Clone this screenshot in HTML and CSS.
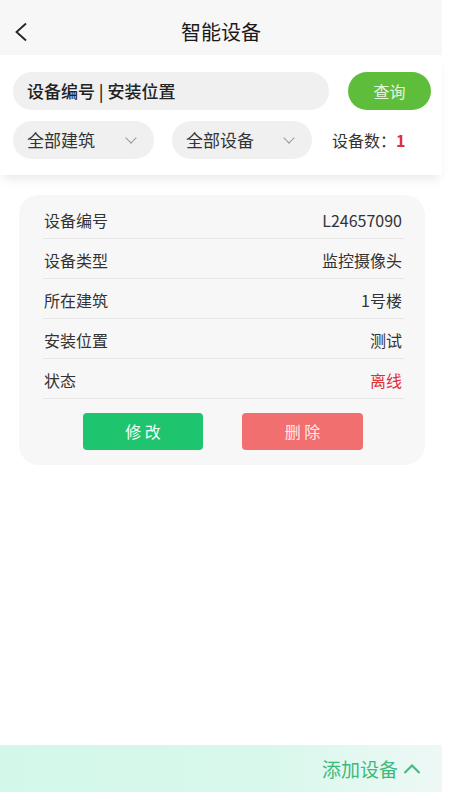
FILE: index.html
```html
<!DOCTYPE html>
<html lang="zh-CN">
<head>
    <meta charset="UTF-8">
    <meta name="viewport" content="width=device-width, initial-scale=1.0">
    <title>智能设备</title>
    <link rel="stylesheet" href="styles.css">
</head>
<body>
<div id="page">
    <header class="top">
        <a class="back">
            <svg width="14" height="20" viewBox="0 0 14 20"><path d="M12 1.5 L2.5 10 L12 18.5" fill="none" stroke="#222" stroke-width="1.8"/></svg>
        </a>
        <h1 class="title">智能设备</h1>
    </header>

    <section class="filter">
        <div class="search-row">
            <div class="search">设备编号 | 安装位置</div>
            <a class="btn-query">查询</a>
        </div>
        <div class="select-row">
            <div class="select">全部建筑<i class="arrow"></i></div>
            <div class="select">全部设备<i class="arrow"></i></div>
            <div class="count">设备数：<b>1</b></div>
        </div>
    </section>

    <div class="card">
        <ul class="info">
            <li><span>设备编号</span><span>L24657090</span></li>
            <li><span>设备类型</span><span>监控摄像头</span></li>
            <li><span>所在建筑</span><span>1号楼</span></li>
            <li><span>安装位置</span><span>测试</span></li>
            <li><span>状态</span><span class="off">离线</span></li>
        </ul>
        <div class="ops">
            <a class="btn edit">修 改</a>
            <a class="btn del">删 除</a>
        </div>
    </div>

    <div class="add-bar">
        添加设备
        <svg width="18" height="12" viewBox="0 0 18 12"><path d="M1.5 10 L9 2.5 L16.5 10" fill="none" stroke="#3cba7c" stroke-width="2"/></svg>
    </div>
</div>
</body>
</html>
```

FILE: styles.css
```css
body {
    margin: 0;
    background: #fff;
    font-family: "Noto Sans CJK SC", "Noto Sans", sans-serif;
    color: #333;
}
ul {
    margin: 0;
    padding: 0;
    list-style: none;
}
a {
    text-decoration: none;
}
#page {
    width: 442px;
    height: 800px;
    display: flex;
    flex-direction: column;
}
.top {
    height: 55px;
    background: #f7f7f7;
    display: flex;
    align-items: center;
    justify-content: center;
    position: relative;
}
.back {
    position: absolute;
    left: 14px;
    top: 22px;
    line-height: 0;
}
.title {
    margin: 0;
    font-size: 20px;
    font-weight: 400;
    color: #1a1a1a;
    padding-top: 8px;
}
.filter {
    padding: 17px 11px 16px 13px;
    background: #fff;
    box-shadow: 0 7px 10px -3px rgba(0, 0, 0, .09);
}
.search-row {
    display: flex;
    align-items: center;
}
.search {
    width: 302px;
    height: 38px;
    line-height: 38px;
    padding-left: 14px;
    border-radius: 19px;
    background: #f0f0f0;
    font-size: 17px;
    font-weight: 500;
    color: #222;
}
.btn-query {
    margin-left: 19px;
    width: 83px;
    height: 38px;
    line-height: 38px;
    border-radius: 19px;
    background: #5fbd3c;
    color: #e6f4dc;
    font-size: 16px;
    text-align: center;
}
.select-row {
    display: flex;
    align-items: center;
    margin-top: 11px;
}
.select {
    width: 127px;
    height: 38px;
    line-height: 38px;
    padding-left: 14px;
    border-radius: 19px;
    background: #f0f0f0;
    font-size: 17px;
    color: #333;
    margin-right: 18px;
    display: flex;
    align-items: center;
}
.select:nth-child(2) {
    width: 126px;
    margin-right: 20px;
}
.arrow {
    width: 7px;
    height: 7px;
    border-right: 1px solid #999;
    border-bottom: 1px solid #999;
    transform: rotate(45deg);
    margin: -5px 0 0 auto;
    margin-right: 19px;
}
.count {
    font-size: 16px;
    color: #333;
}
.count b {
    color: #e0303a;
    font-weight: 700;
}
.card {
    margin: 20px 0 0 19px;
    width: 358px;
    padding: 4px 23px 15px 25px;
    background: #f7f7f7;
    border-radius: 20px;
}
.info li {
    height: 37px;
    padding-top: 2px;
    display: flex;
    align-items: center;
    justify-content: space-between;
    border-bottom: 1px solid #e6e6e6;
    font-size: 16px;
    color: #333;
    margin-left: -1px;
    padding-left: 1px;
    margin-right: -2px;
    padding-right: 2px;
}
.info .off {
    color: #e0303a;
}
.ops {
    display: flex;
    justify-content: center;
    gap: 39px;
    margin-top: 14px;
}
.btn {
    width: 120px;
    height: 37px;
    line-height: 37px;
    border-radius: 4px;
    text-align: center;
    font-size: 16px;
    color: #f2fff6;
}
.edit {
    background: #1fc46f;
}
.del {
    width: 121px;
    background: #f26f6f;
    color: #ffeaea;
}
.add-bar {
    margin-top: auto;
    margin-bottom: 8px;
    height: 47px;
    background: linear-gradient(90deg, #d3f8e9, #d8f8ec 60%, #eef8f6);
    display: flex;
    align-items: center;
    justify-content: flex-end;
    padding-right: 21px;
    font-size: 19px;
    color: #3cba7c;
}
.add-bar svg {
    margin-left: 5px;
}
```
